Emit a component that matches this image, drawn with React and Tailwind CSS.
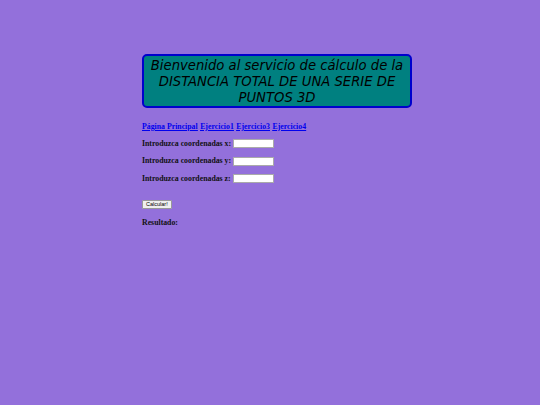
export default function App() {
  const serif = { fontFamily: '"Liberation Serif", "Times New Roman", serif' };
  return (
    <div className="min-h-[405px] w-full bg-[#9370db] pt-[54px] pl-[142px]">
      <div
        className="w-[270px] rounded-[5px] border-2 border-[#0000cd] bg-[#008080] px-1 pt-[1.5px] text-center text-[13.2px] leading-[16px] italic text-black"
        style={{ fontFamily: '"DejaVu Sans", Verdana, sans-serif' }}
      >
        Bienvenido al servicio de cálculo de la DISTANCIA TOTAL DE UNA SERIE DE PUNTOS 3D
      </div>
      <div className="mt-[14px] text-[7.8px] font-bold leading-[10px]" style={serif}>
        <div className="flex gap-[2.5px] text-[#0000ee] underline">
          <a href="#">Página Principal</a>
          <a href="#">Ejercicio1</a>
          <a href="#">Ejercicio3</a>
          <a href="#">Ejercicio4</a>
        </div>
        <div className="mt-[7px] flex flex-col gap-[7.5px] text-[#111]">
          {["x", "y", "z"].map((c) => (
            <div key={c} className="flex items-center gap-[2px]">
              <span>Introduzca coordenadas {c}:</span>
              <input className="h-[9px] w-[41px] border border-[#aaa] bg-white" />
            </div>
          ))}
        </div>
        <div className="mt-[15px]">
          <button
            className="h-[9px] rounded-[1px] border border-[#999] bg-[#efefef] px-[3px] text-[5.5px] leading-[7px] font-normal text-black"
            style={{ fontFamily: '"Liberation Sans", Arial, sans-serif' }}
          >
            Calcular!
          </button>
        </div>
        <div className="mt-[9px] text-[#111]">Resultado:</div>
      </div>
    </div>
  );
}
